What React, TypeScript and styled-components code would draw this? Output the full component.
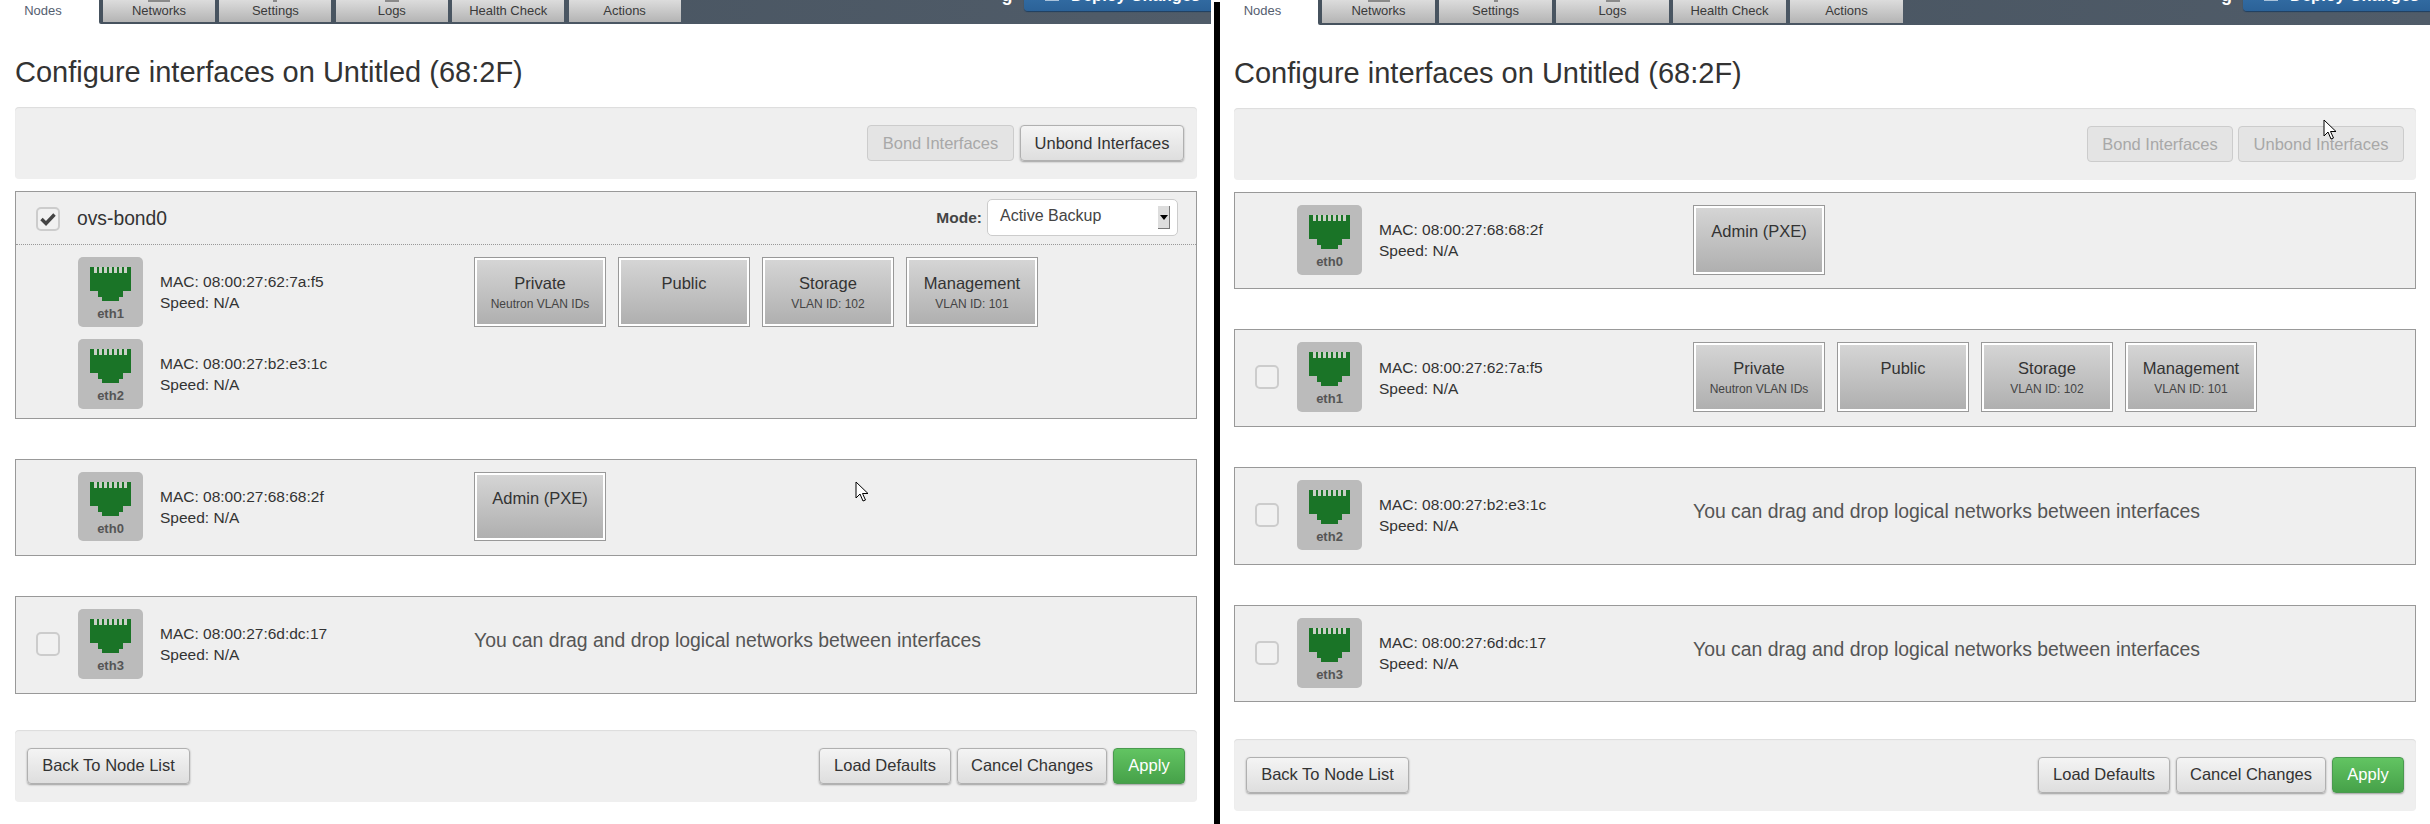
import React from 'react';
import styled, { createGlobalStyle } from 'styled-components';

const GlobalStyle = createGlobalStyle`
  html, body {
    margin: 0;
    padding: 0;
    background: #fff;
    font-family: "Liberation Sans", Arial, sans-serif;
    color: #333;
  }
`;

type Network = { name: string; sub?: string };
type Iface = { name: string; mac: string };

const tabs = [
  { label: 'Networks', stub: 22 },
  { label: 'Settings', stub: 4 },
  { label: 'Logs', stub: 14 },
  { label: 'Health Check', stub: 0 },
  { label: 'Actions', stub: 0 },
];

const ethernet: Network[] = [
  { name: 'Private', sub: 'Neutron VLAN IDs' },
  { name: 'Public' },
  { name: 'Storage', sub: 'VLAN ID: 102' },
  { name: 'Management', sub: 'VLAN ID: 101' },
];

const Page = styled.div`
  display: flex;
  width: 2430px;
  height: 824px;
  overflow: hidden;
`;

const Screen = styled.div<{ $width?: number; $left: number; $right: number }>`
  position: relative;
  box-sizing: border-box;
  width: ${(p) => (p.$width ? `${p.$width}px` : 'auto')};
  flex: ${(p) => (p.$width ? 'none' : 1)};
  padding: 0 ${(p) => p.$right}px 0 ${(p) => p.$left}px;
`;

const Divider = styled.div`
  width: 6px;
  margin-top: 2px;
  background: #000;
`;

const Nav = styled.div<{ $height: number; $left: number; $right: number }>`
  display: flex;
  height: ${(p) => p.$height}px;
  margin: 0 ${(p) => p.$right}px 0 -${(p) => p.$left}px;
  overflow: hidden;
`;

const NodesTab = styled.div<{ $width: number }>`
  width: ${(p) => p.$width}px;
  flex: none;
  box-sizing: border-box;
  padding: 3px 13px 0 0;
  font-size: 13px;
  line-height: 15px;
  color: #556070;
  text-align: center;
`;

const NavBar = styled.div<{ $gap: number }>`
  flex: 1;
  display: flex;
  gap: ${(p) => p.$gap}px;
  padding-left: 4px;
  background: linear-gradient(90deg, #46525e, #505c69);
  border-radius: 0 0 0 2px;
`;

const Tab = styled.div<{ $stub: number; $width: number }>`
  position: relative;
  width: ${(p) => p.$width}px;
  flex: none;
  height: calc(100% - 2px);
  box-sizing: border-box;
  padding-top: 3px;
  background: linear-gradient(#dcdcdc, #b4b4b4);
  font-size: 13px;
  line-height: 15px;
  color: #3a3a3a;
  text-align: center;

  &::before {
    content: '';
    position: absolute;
    top: 0;
    left: 50%;
    width: ${(p) => p.$stub}px;
    height: 2px;
    margin-left: -${(p) => p.$stub / 2}px;
    background: #8a8a8a;
  }
`;

const StatusTail = styled.span`
  margin: -15px 7px 0 auto;
  font-size: 18px;
  line-height: 20px;
  font-weight: bold;
  color: #fff;
  height: 20px;
`;

const DeployButton = styled.div`
  position: relative;
  width: 187px;
  flex: none;
  height: 40px;
  margin-top: -29px;
  box-sizing: border-box;
  padding: 16px 0 0 47px;
  border-radius: 0 0 0 4px;
  background: linear-gradient(#3f7fb8, #2b6298);
  box-shadow: 0 1px 1px #1d3f62;
  font-size: 16.5px;
  line-height: 17px;
  font-weight: bold;
  white-space: nowrap;
  color: #fff;

  &::before {
    content: '';
    position: absolute;
    left: 21px;
    top: 27px;
    width: 14px;
    height: 3px;
    background: #a9c3dc;
  }
`;

const Title = styled.h1`
  margin: 0;
  height: 83px;
  box-sizing: border-box;
  padding-top: 31px;
  font-size: 29px;
  line-height: 34px;
  font-weight: normal;
  color: #333;
`;

const Panel = styled.div<{ $top: number; $right?: number }>`
  display: flex;
  justify-content: space-between;
  align-items: center;
  height: 72px;
  box-sizing: border-box;
  margin-top: ${(p) => p.$top}px;
  padding: 0 ${(p) => p.$right ?? 12}px 0 12px;
  background: #efefef;
  border-radius: 4px;
  box-shadow: inset 0 1px 1px rgba(0, 0, 0, 0.08);
`;

const ButtonGroup = styled.div<{ $gap?: number }>`
  display: flex;
  gap: ${(p) => p.$gap ?? 6}px;
  margin-left: auto;
`;

const Button = styled.button<{ $width: number; $variant?: 'disabled' | 'success' }>`
  width: ${(p) => p.$width}px;
  height: 36px;
  padding: 0;
  border-radius: 4px;
  font-family: inherit;
  font-size: 16.5px;
  border: 1px solid ${(p) => (p.$variant === 'disabled' ? '#ccc' : p.$variant === 'success' ? '#4a9a4f' : '#b0b0b0')};
  color: ${(p) => (p.$variant === 'disabled' ? '#a8a8a8' : p.$variant === 'success' ? '#fff' : '#333')};
  background: ${(p) =>
    p.$variant === 'disabled'
      ? '#e4e4e4'
      : p.$variant === 'success'
        ? 'linear-gradient(#62c462, #46a149)'
        : 'linear-gradient(#f4f4f4, #dedede)'};
  box-shadow: ${(p) => (p.$variant === 'disabled' ? 'none' : '0 1px 2px rgba(0, 0, 0, 0.35)')};
`;

const Section = styled.div<{ $top: number }>`
  margin-top: ${(p) => p.$top}px;
  background: #efefef;
  border: 1px solid #999;
`;

const BondHeader = styled.div`
  display: flex;
  height: 53px;
  box-sizing: border-box;
  padding: 7px 18px 0 20px;
  border-bottom: 1px dotted #999;
`;

const BondCheck = styled.div`
  margin-top: 8px;
`;

const BondName = styled.div`
  margin-left: 17px;
  padding-top: 9px;
  font-size: 19.3px;
  line-height: 22px;
  color: #333;
`;

const ModeLabel = styled.label`
  margin-left: auto;
  padding-top: 9px;
  font-size: 15.5px;
  line-height: 20px;
  font-weight: bold;
  color: #444;
`;

const ModeSelect = styled.div`
  position: relative;
  width: 191px;
  height: 37px;
  margin-left: 5px;
  box-sizing: border-box;
  padding: 6px 0 0 12px;
  background: #fff;
  border: 1px solid #ccc;
  border-radius: 5px;
  font-size: 16px;
  line-height: 20px;
  color: #444;
`;

const SelectArrow = styled.span`
  position: absolute;
  top: 6px;
  right: 7px;
  width: 12px;
  height: 23px;
  box-sizing: border-box;
  background: #ddd;
  border-right: 1px solid #777;
  border-bottom: 1px solid #777;

  &::after {
    content: '';
    position: absolute;
    top: 9px;
    left: 2px;
    border: 4px solid transparent;
    border-top: 5px solid #000;
    border-bottom: 0;
  }
`;

const Rows = styled.div<{ $bond?: boolean }>`
  display: flex;
  flex-direction: column;
  gap: 12.4px;
  padding: 12px 0 ${(p) => (p.$bond ? 9.2 : 13.8)}px;
`;

const Row = styled.div`
  display: flex;
  align-items: stretch;
  padding-left: 20px;
`;

const CheckSlot = styled.div`
  width: 24px;
  margin-right: 18px;
  display: flex;
  align-items: center;
  flex: none;
`;

const Checkbox = styled.span`
  display: flex;
  width: 24px;
  height: 24px;
  box-sizing: border-box;
  align-items: center;
  justify-content: center;
  background: #f1f1f1;
  border: 2px solid #ccc;
  border-radius: 5px;
`;

const Port = styled.div`
  width: 65px;
  height: 69.6px;
  flex: none;
  box-sizing: border-box;
  padding-top: 10px;
  background: #bbb;
  border-radius: 5px;
  text-align: center;
`;

const PortIcon = styled.svg`
  display: block;
  margin: 0 auto;
`;

const PortName = styled.div`
  margin-top: 4px;
  font-size: 13px;
  line-height: 17px;
  font-weight: bold;
  color: #555;
`;

const Info = styled.div`
  width: 331px;
  flex: none;
  box-sizing: border-box;
  padding: 1px 0 0 17px;
  display: flex;
  flex-direction: column;
  justify-content: center;
  font-size: 15.5px;
  line-height: 21px;
  color: #333;
`;

const Networks = styled.div`
  display: flex;
  gap: 12px;
  align-items: center;
`;

const Hint = styled.div`
  padding-bottom: 6px;
  font-size: 19.4px;
  color: #555;
`;

const NetworkBox = styled.div`
  width: 132px;
  height: 69.6px;
  box-sizing: border-box;
  padding-top: 15px;
  border: 1px solid #999;
  box-shadow: inset 0 0 0 2px #fff;
  background: linear-gradient(#d6d6d6, #aeaeae);
  text-align: center;
`;

const NetworkName = styled.div`
  font-size: 16.5px;
  line-height: 21px;
  color: #333;
`;

const NetworkSub = styled.div`
  font-size: 12px;
  line-height: 20px;
  color: #444;
`;

const Cursor = styled.svg<{ $x: number; $y: number }>`
  position: absolute;
  left: ${(p) => p.$x}px;
  top: ${(p) => p.$y}px;
`;

const RjIcon = () => (
  <PortIcon width="41" height="34" viewBox="0 0 41 34">
    <path d="M0 0H41V24H33V30H29V34H12V30H8V24H0Z" fill="#1a7427" />
    {[4, 9, 14, 19, 24, 29, 34].map((x) => (
      <rect key={x} x={x} y="0" width="3" height="6" fill="#c9cfc6" />
    ))}
  </PortIcon>
);

const PointerIcon = ({ x, y }: { x: number; y: number }) => (
  <Cursor $x={x} $y={y} width="14" height="22" viewBox="0 0 14 22">
    <path d="M1 1V17L5 13L8 20L10.5 19L7.5 12.5H13Z" fill="#fff" stroke="#000" strokeWidth="1" />
  </Cursor>
);

const CheckMark = () => (
  <svg width="16" height="14" viewBox="0 0 16 14">
    <path d="M1.5 7L6 11.5L14.5 2.5" fill="none" stroke="#444" strokeWidth="3.4" />
  </svg>
);

const InterfaceRow: React.FC<{
  iface: Iface;
  check?: 'none' | 'empty';
  networks?: Network[];
}> = ({ iface, check = 'none', networks }) => (
  <Row>
    <CheckSlot>{check === 'empty' && <Checkbox />}</CheckSlot>
    <Port>
      <RjIcon />
      <PortName>{iface.name}</PortName>
    </Port>
    <Info>
      <div>MAC: {iface.mac}</div>
      <div>Speed: N/A</div>
    </Info>
    <Networks>
      {networks ? (
        networks.map((n) => (
          <NetworkBox key={n.name}>
            <NetworkName>{n.name}</NetworkName>
            {n.sub && <NetworkSub>{n.sub}</NetworkSub>}
          </NetworkBox>
        ))
      ) : (
        <Hint>You can drag and drop logical networks between interfaces</Hint>
      )}
    </Networks>
  </Row>
);

const TopNav: React.FC<{
  height: number;
  left: number;
  right: number;
  nodes: number;
  tabWidth: number;
  gap: number;
}> = ({ height, left, right, nodes, tabWidth, gap }) => (
  <Nav $height={height} $left={left} $right={right}>
    <NodesTab $width={nodes}>Nodes</NodesTab>
    <NavBar $gap={gap}>
      {tabs.map((t) => (
        <Tab key={t.label} $stub={t.stub} $width={tabWidth}>
          {t.label}
        </Tab>
      ))}
      <StatusTail>g</StatusTail>
      <DeployButton>Deploy Changes</DeployButton>
    </NavBar>
  </Nav>
);

const Footer: React.FC<{ top: number }> = ({ top }) => (
  <Panel $top={top}>
    <Button $width={163}>Back To Node List</Button>
    <ButtonGroup>
      <Button $width={132}>Load Defaults</Button>
      <Button $width={150}>Cancel Changes</Button>
      <Button $width={72} $variant="success">
        Apply
      </Button>
    </ButtonGroup>
  </Panel>
);

export default function App() {
  return (
    <Page>
      <GlobalStyle />
      <Screen $width={1214} $left={15} $right={17}>
        <TopNav height={24} left={15} right={-14} nodes={99} tabWidth={112} gap={4.4} />
        <Title>Configure interfaces on Untitled (68:2F)</Title>
        <Panel $top={0} $right={13}>
          <ButtonGroup>
            <Button $width={147} $variant="disabled">
              Bond Interfaces
            </Button>
            <Button $width={164}>Unbond Interfaces</Button>
          </ButtonGroup>
        </Panel>
        <Section $top={12}>
          <BondHeader>
            <BondCheck>
              <Checkbox>
                <CheckMark />
              </Checkbox>
            </BondCheck>
            <BondName>ovs-bond0</BondName>
            <ModeLabel>Mode:</ModeLabel>
            <ModeSelect>
              Active Backup
              <SelectArrow />
            </ModeSelect>
          </BondHeader>
          <Rows $bond>
            <InterfaceRow iface={{ name: 'eth1', mac: '08:00:27:62:7a:f5' }} networks={ethernet} />
            <InterfaceRow iface={{ name: 'eth2', mac: '08:00:27:b2:e3:1c' }} networks={[]} />
          </Rows>
        </Section>
        <Section $top={40}>
          <Rows>
            <InterfaceRow iface={{ name: 'eth0', mac: '08:00:27:68:68:2f' }} networks={[{ name: 'Admin (PXE)' }]} />
          </Rows>
        </Section>
        <Section $top={40}>
          <Rows>
            <InterfaceRow iface={{ name: 'eth3', mac: '08:00:27:6d:dc:17' }} check="empty" />
          </Rows>
        </Section>
        <Footer top={36} />
        <PointerIcon x={855} y={481} />
      </Screen>
      <Divider />
      <Screen $left={14} $right={14}>
        <TopNav height={25} left={14} right={-14} nodes={98} tabWidth={113} gap={4} />
        <Title>Configure interfaces on Untitled (68:2F)</Title>
        <Panel $top={0}>
          <ButtonGroup $gap={5}>
            <Button $width={146} $variant="disabled">
              Bond Interfaces
            </Button>
            <Button $width={166} $variant="disabled">
              Unbond Interfaces
            </Button>
          </ButtonGroup>
        </Panel>
        <Section $top={12}>
          <Rows>
            <InterfaceRow iface={{ name: 'eth0', mac: '08:00:27:68:68:2f' }} networks={[{ name: 'Admin (PXE)' }]} />
          </Rows>
        </Section>
        <Section $top={40}>
          <Rows>
            <InterfaceRow iface={{ name: 'eth1', mac: '08:00:27:62:7a:f5' }} check="empty" networks={ethernet} />
          </Rows>
        </Section>
        <Section $top={40.4}>
          <Rows>
            <InterfaceRow iface={{ name: 'eth2', mac: '08:00:27:b2:e3:1c' }} check="empty" />
          </Rows>
        </Section>
        <Section $top={40.4}>
          <Rows>
            <InterfaceRow iface={{ name: 'eth3', mac: '08:00:27:6d:dc:17' }} check="empty" />
          </Rows>
        </Section>
        <Footer top={36.4} />
        <PointerIcon x={1103} y={119} />
      </Screen>
    </Page>
  );
}
